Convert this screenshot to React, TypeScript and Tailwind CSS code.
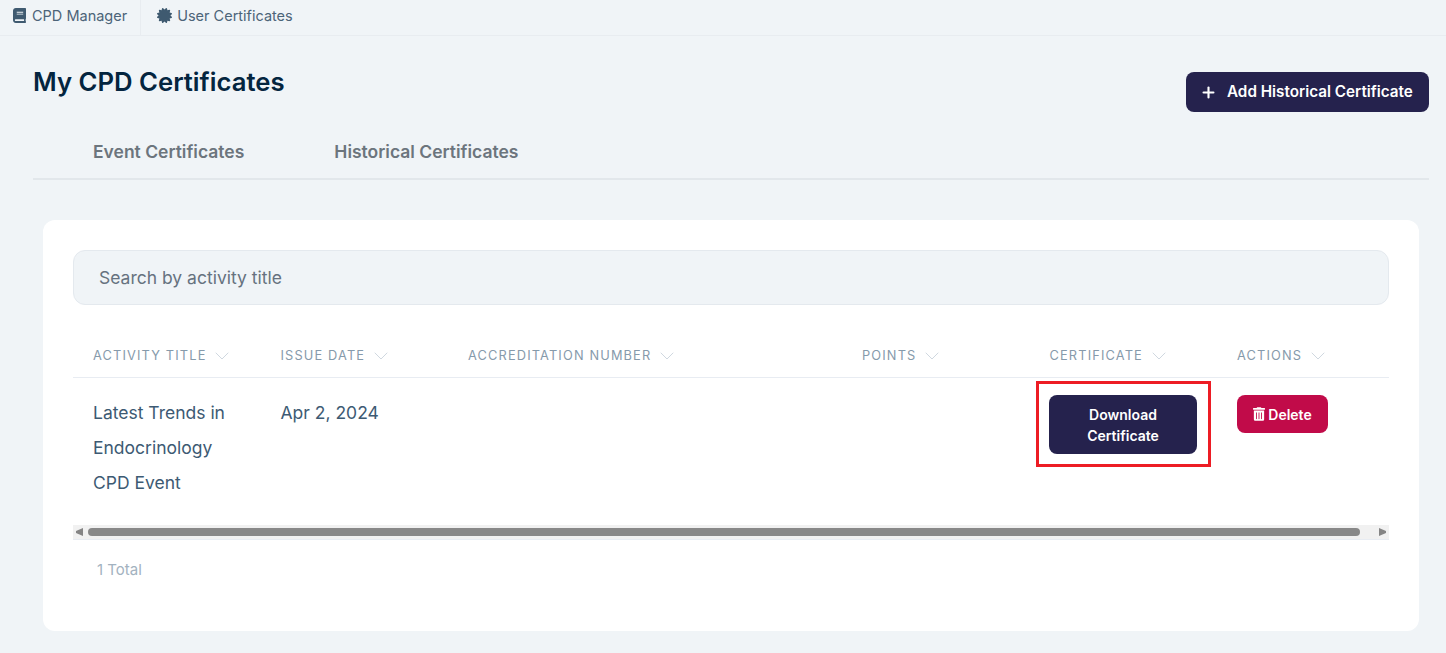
import { Plus, ChevronDown } from "lucide-react";
import { FaBook, FaCertificate, FaTrashAlt } from "react-icons/fa";

const cols = "grid grid-cols-[187.5px_187.5px_394px_187.5px_187.5px_172px]";

function Head({ label }: { label: string }) {
  return (
    <div className="flex items-center pl-5 text-[12.8px] leading-none tracking-[1.15px] text-[#869aab]">
      <span>{label}</span>
      <ChevronDown className="ml-[4px] h-[24px] w-[24px] text-[#c8d1da]" strokeWidth={0.85} />
    </div>
  );
}

export default function App() {
  return (
    <div className="h-[653px] w-full overflow-hidden bg-[#f0f4f7] font-['Inter',sans-serif]">
      <nav className="flex h-[36px] items-stretch border-b border-[#e8ecf0] text-[14.5px] text-[#4c6479]">
        <div className="flex items-center gap-[6px] border-r border-[#e8ecf0] pl-[13px] pr-[13px] pb-[4px]">
          <FaBook className="h-[15px] w-[13px] text-[#3f5a70]" />
          <span>CPD Manager</span>
        </div>
        <div className="flex items-center gap-[5px] pl-[16px] pb-[4px]">
          <FaCertificate className="h-[15px] w-[15px] text-[#3f5a70]" />
          <span>User Certificates</span>
        </div>
      </nav>
      <main className="pl-[33px] pr-[17px]">
        <div className="flex items-start justify-between">
          <h1 className="pt-[29px] text-[25.7px] font-semibold leading-[34px] text-[#04253f]">My CPD Certificates</h1>
          <button className="mt-[36px] flex h-[40px] w-[243px] items-center rounded-[8px] bg-[#25224d] pl-[14px] text-[15.25px] font-semibold text-white">
            <Plus className="mr-[10px] h-[17px] w-[17px]" strokeWidth={3} />
            Add Historical Certificate
          </button>
        </div>
        <div className="mt-[11px] flex h-[57px] items-start gap-[90px] border-b-2 border-[#e2e7eb] pl-[60px] pt-[17px] text-[17.5px] font-semibold leading-[24px] text-[#6c757d]">
          <span>Event Certificates</span>
          <span>Historical Certificates</span>
        </div>
        <section className="ml-[10px] mr-[10px] mt-[40px] h-[411px] rounded-[12px] bg-white px-[30px] pt-[30px]">
          <div className="flex h-[55px] items-center rounded-[12px] border border-[#e4e9ee] bg-[#f0f4f7] pl-[25px] pt-[1px] text-[17.5px] text-[#66727f]">
            Search by activity title
          </div>
          <div className={`${cols} mt-[31px] h-[42px] items-center border-b border-[#e8ecf2] pb-[1px]`}>
            <Head label="ACTIVITY TITLE" />
            <Head label="ISSUE DATE" />
            <Head label="ACCREDITATION NUMBER" />
            <Head label="POINTS" />
            <Head label="CERTIFICATE" />
            <Head label="ACTIONS" />
          </div>
          <div className={`${cols} h-[147px] text-[17.5px] leading-[35px] text-[#3d5a73]`}>
            <div className="px-5 pt-[17px]">Latest Trends in Endocrinology CPD Event</div>
            <div className="pl-5 pt-[17px]">Apr 2, 2024</div>
            <div />
            <div />
            <div className="pl-[19.5px] pt-[17px]">
              <div className="relative">
                <button className="flex h-[59px] w-[148px] items-center justify-center rounded-[8px] bg-[#25224d] px-4 text-center text-[14px] font-semibold leading-[21px] text-white">
                  Download Certificate
                </button>
                <div className="absolute -left-[13px] -top-[14px] h-[86px] w-[175px] border-[3px] border-[#ed1c24]" />
              </div>
            </div>
            <div className="pl-5 pt-[17px]">
              <button className="flex h-[38px] w-[91px] items-center justify-center gap-[3px] rounded-[8px] bg-[#c10b49] text-[14px] font-semibold text-white">
                <FaTrashAlt className="h-[14px] w-[12px]" />
                Delete
              </button>
            </div>
          </div>
          <div className="flex h-[15px] items-center border-b border-[#e8ecf2] bg-[#f1f1f1]">
            <svg className="ml-[3px] h-[8px] w-[7px] shrink-0 text-[#858585]" viewBox="0 0 7 8" fill="currentColor"><path d="M7 0v8L0 5V3z" /></svg>
            <div className="ml-[5px] h-[8px] w-[1272px] rounded-full bg-[#888888]" />
            <svg className="ml-[19px] h-[8px] w-[7px] shrink-0 text-[#858585]" viewBox="0 0 7 8" fill="currentColor"><path d="M0 0v8l7-3V3z" /></svg>
          </div>
          <div className="pl-[24px] pt-[21px] text-[15px] leading-[17px] text-[#a3b2c0]">1 Total</div>
        </section>
      </main>
    </div>
  );
}
